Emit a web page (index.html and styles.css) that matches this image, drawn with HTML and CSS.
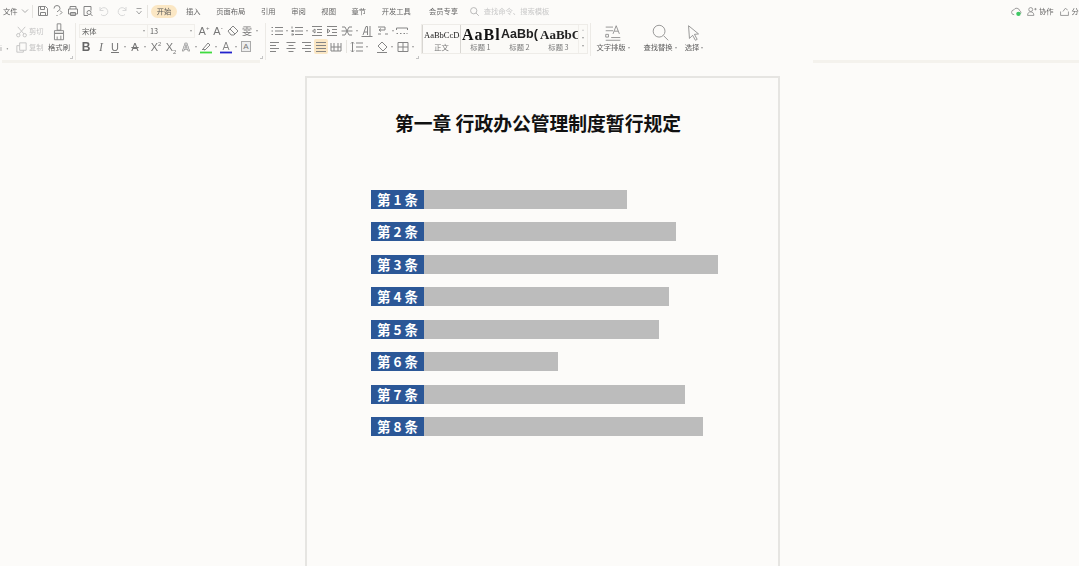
FILE: index.html
```html
<!DOCTYPE html>
<html lang="zh-CN">
<head>
<meta charset="utf-8">
<title>第一章 行政办公管理制度暂行规定</title>
<link rel="stylesheet" href="styles.css">
</head>
<body>
<header class="ribbon">
  <div class="tabrow">
    <span class="file">文件</span>
    <svg class="chev" viewBox="0 0 8 8"><path d="M1 2.500l3 3 3-3"/></svg>
    <i class="vsep"></i>
    <div class="quick">
      <svg class="ic" viewBox="0 0 14 14"><path d="M2.500 2.500h7l2 2v7h-9zM4.500 2.500v3h4v-3M4.500 11.500v-3h5v3"/></svg>
      <svg class="ic" viewBox="0 0 14 14"><path d="M3 4.500a3 3 0 0 1 6 0c0 2-2 2-3 3.500M9 6.500l2 2-2 2M5.500 11.500h1"/></svg>
      <svg class="ic" viewBox="0 0 14 14"><path d="M4 5V2.500h6V5M2.500 5h9v5h-9zM4.500 8.500h5v3h-5z"/></svg>
      <svg class="ic" viewBox="0 0 14 14"><path d="M3 11.500v-9h7v4M3 11.500h4"/><circle cx="8" cy="8.500" r="2"/><path d="M9.500 10l2 2"/></svg>
      <svg class="ic pale" viewBox="0 0 14 14"><path d="M4 3v3.500h3.500M4 6.500a4 4 0 1 1 1 4"/></svg>
      <svg class="ic pale redo" viewBox="0 0 14 14"><path d="M10 3v3.500H6.500M10 6.500a4 4 0 1 0-1 4"/></svg>
      <svg class="ic qmore" viewBox="0 0 14 14"><path d="M4.500 4.500h5M4.500 7l2.500 3 2.500-3"/></svg>
    </div>
    <i class="vsep"></i>
    <nav class="tabs">
      <span class="tab active">开始</span>
      <span class="tab first">插入</span>
      <span class="tab">页面布局</span>
      <span class="tab">引用</span>
      <span class="tab">审阅</span>
      <span class="tab">视图</span>
      <span class="tab">章节</span>
      <span class="tab wide">开发工具</span>
      <span class="tab">会员专享</span>
    </nav>
    <div class="search">
      <svg class="ic" viewBox="0 0 14 14"><circle cx="6" cy="6" r="4"/><path d="M9 9l3.500 3.500"/></svg>
      <span>查找命令、搜索模板</span>
    </div>
    <div class="right">
      <svg class="ic cloud" viewBox="0 0 14 14"><path d="M4 11a3 3 0 0 1-.500-6 4 4 0 0 1 7.500 1 2.500 2.500 0 0 1 1 4"/><circle class="ok" cx="9.500" cy="10" r="2.800"/></svg>
      <svg class="ic" viewBox="0 0 14 14"><circle cx="6" cy="4.500" r="2.500"/><path d="M2 12c0-3 1.500-4.500 4-4.500s4 1.500 4 4.500zM10.500 4h3M12 2.500v3"/></svg>
      <span class="rtext">协作</span>
      <svg class="ic share" viewBox="0 0 14 14"><path d="M2 7v5h10V7M5 7l3-4 3 2"/></svg>
      <span class="rtext">分</span>
    </div>
  </div>
  <div class="toolrow">
    <section class="grp clip">
      <div class="paste"><svg class="ic" viewBox="0 0 14 14"><path d="M-4 3h8v8h-8"/></svg><span class="pastecaret">i ·</span></div>
      <div class="cliprows">
        <div class="cliprow"><svg class="ic pale" viewBox="0 0 14 14"><circle cx="3.500" cy="11" r="1.800"/><circle cx="10.500" cy="11" r="1.800"/><path d="M4.500 9.500L11 2M9.500 9.500L3 2"/></svg><span>剪切</span></div>
        <div class="cliprow"><svg class="ic pale" viewBox="0 0 14 14"><path d="M5 2h7v8H5zM5 5H2v7h7v-2"/></svg><span>复制</span></div>
      </div>
      <div class="big brush">
        <svg viewBox="0 0 22 22"><path d="M9 2h4v7H9zM6 9.500h10v3H6zM6 12.500h10v7H6zM9 16v3.500M13 15v4.500"/></svg>
        <span>格式刷</span>
      </div>
      <i class="launch"></i>
    </section>
    <section class="grp font">
      <div class="frow">
        <div class="sel sname"><span>宋体</span><b class="car"></b></div>
        <div class="sel ssize"><span>13</span><b class="car"></b></div>
        <div class="t"><span class="gl">A<sup>+</sup></span></div>
        <div class="t"><span class="gl">A<sup>-</sup></span></div>
        <div class="t m1"><svg class="ic" viewBox="0 0 14 14"><path d="M7 2l5 5-4 4H5L2 7zM4 5l5 5"/></svg></div>
        <div class="t c"><span class="gl han">雯</span><b class="car"></b></div>
      </div>
      <div class="frow r2">
        <div class="t"><span class="gl bold">B</span></div>
        <div class="t m1"><span class="gl ital">I</span></div>
        <div class="t c"><span class="gl under">U</span><b class="car"></b></div>
        <div class="t c"><span class="gl strike">A</span><b class="car"></b></div>
        <div class="t m1"><span class="gl">X<sup>2</sup></span></div>
        <div class="t m1"><span class="gl">X<sub>2</sub></span></div>
        <div class="t c m1"><span class="gl outline">A</span><b class="car"></b></div>
        <div class="t c"><svg class="ic" viewBox="0 0 14 14"><path d="M4 9l5-6 2 2-5 5zM3 10l1-1 2 1"/><path class="hl" d="M1 12.500h12"/></svg><b class="car"></b></div>
        <div class="t c"><svg class="ic" viewBox="0 0 14 14"><path d="M4 10l3-8 3 8M5 7.500h4"/><path class="bl" d="M1 12.500h12"/></svg><b class="car"></b></div>
        <div class="t"><span class="gl boxed">A</span></div>
      </div>
      <i class="launch"></i>
    </section>
    <section class="grp para">
      <div class="frow p1">
        <div class="t c"><svg class="ic" viewBox="0 0 14 14"><path d="M5 3.500h8M5 7h8M5 10.500h8M1.500 3.500h1.500M1.500 7h1.500M1.500 10.500h1.500"/></svg><b class="car"></b></div>
        <div class="t c"><svg class="ic" viewBox="0 0 14 14"><path d="M5 3.500h8M5 7h8M5 10.500h8M2 2.500v2M1.500 6.500h2v1h-2M1.500 10h2v1h-2"/></svg><b class="car"></b></div>
        <div class="t"><svg class="ic" viewBox="0 0 14 14"><path d="M2 2.500h10M7 5.500h5M7 8.500h5M2 11.500h10M5 5L2.500 7 5 9z"/></svg></div>
        <div class="t m1"><svg class="ic" viewBox="0 0 14 14"><path d="M2 2.500h10M7 5.500h5M7 8.500h5M2 11.500h10M2.500 5L5 7 2.500 9z"/></svg></div>
        <div class="t c m1"><svg class="ic" viewBox="0 0 14 14"><path d="M2 3h3l4 8h3M2 11h3l4-8h3M1.500 7h11"/></svg><b class="car"></b></div>
        <div class="t"><svg class="ic" viewBox="0 0 14 14"><path d="M3 11l3-8.500h1.500v8.500M4 8h3.500M10 2v10M1.500 12.500h11"/></svg></div>
        <div class="t c m2"><svg class="ic" viewBox="0 0 14 14"><path d="M2 3h7v3H3M5 4.500L3 6l2 1.500M9 10h3M2 10h3"/></svg><b class="car"></b></div>
        <div class="t tight"><svg class="ic" viewBox="0 0 14 14"><path d="M1.500 4h11M1.500 4v2M12.500 4v2M1.500 9.500h1.500M5 9.500h1.500M8.500 9.500h1.500M11.500 9.500h1"/></svg></div>
      </div>
      <div class="frow p2">
        <div class="t"><svg class="ic" viewBox="0 0 14 14"><path d="M2 2.500h9M2 5.500h6M2 8.500h9M2 11.500h6"/></svg></div>
        <div class="t m2"><svg class="ic" viewBox="0 0 14 14"><path d="M2.500 2.500h9M4.500 5.500h5M2.500 8.500h9M4.500 11.500h5"/></svg></div>
        <div class="t m1"><svg class="ic" viewBox="0 0 14 14"><path d="M3 2.500h9M6 5.500h6M3 8.500h9M6 11.500h6"/></svg></div>
        <div class="t m1 on"><svg class="ic" viewBox="0 0 14 14"><path d="M2 2.500h10M2 5.500h10M2 8.500h10M2 11.500h10"/></svg></div>
        <div class="t m1"><svg class="ic" viewBox="0 0 14 14"><path d="M2 3v8h10V3M5 3v8M9 3v8M2 7h10"/></svg></div>
        <i class="minisep"></i>
        <div class="t c"><svg class="ic" viewBox="0 0 14 14"><path d="M2.500 2v10M1 3.500L2.500 2 4 3.500M1 10.500L2.500 12 4 10.500M6 3h7M6 7h7M6 11h7"/></svg><b class="car"></b></div>
        <div class="t c m5"><svg class="ic" viewBox="0 0 14 14"><path d="M7 2l5 5-4 4-5-5zM2 12.500h10"/></svg><b class="car"></b></div>
        <div class="t c m1"><svg class="ic" viewBox="0 0 14 14"><path d="M2 2.500h10v9H2zM7 2.500v9M2 7h10"/></svg><b class="car"></b></div>
      </div>
      <i class="launch"></i>
    </section>
    <section class="gallery">
      <div class="sty on"><span class="s0">AaBbCcDd</span><small>正文</small></div>
      <div class="sty"><span class="s1">AaBl</span><small>标题 1</small></div>
      <div class="sty"><span class="s2">AaBb(</span><small>标题 2</small></div>
      <div class="sty"><span class="s3">AaBbC</span><small>标题 3</small></div>
      <div class="scroll"><b class="up"></b><b class="car"></b><b class="car more"></b></div>
    </section>
    <section class="actions">
      <div class="big act1">
        <svg viewBox="0 0 22 22"><path d="M3 4.500h8M3 8.500h8M3 12.500h3v3H3zM9 16h10M3 19h16M11 12L14.500 3 18 12M12.500 9h4"/></svg>
        <span>文字排版<b class="car"></b></span>
      </div>
      <div class="big act2">
        <svg viewBox="0 0 22 22"><circle cx="10" cy="9" r="6.500"/><path d="M15 14l5 5"/></svg>
        <span>查找替换<b class="car"></b></span>
      </div>
      <div class="big act3">
        <svg viewBox="0 0 22 22"><path d="M5 3l11 9-4.500.5 3 5.500-2 1-3-5.500L6 17z"/></svg>
        <span>选择<b class="car"></b></span>
      </div>
    </section>
  </div>
  <div class="shade"><i class="sl"></i><i class="sr"></i></div>
</header>
<main class="workspace">
  <article class="page">
    <h1>第一章 行政办公管理制度暂行规定</h1>
    <ul class="chart">
      <li class="row"><span class="label">第 1 条</span><i class="bar" style="width:203px"></i></li>
      <li class="row"><span class="label">第 2 条</span><i class="bar" style="width:252px"></i></li>
      <li class="row"><span class="label">第 3 条</span><i class="bar" style="width:294px"></i></li>
      <li class="row"><span class="label">第 4 条</span><i class="bar" style="width:245px"></i></li>
      <li class="row"><span class="label">第 5 条</span><i class="bar" style="width:235px"></i></li>
      <li class="row"><span class="label">第 6 条</span><i class="bar" style="width:134px"></i></li>
      <li class="row"><span class="label">第 7 条</span><i class="bar" style="width:261px"></i></li>
      <li class="row"><span class="label">第 8 条</span><i class="bar" style="width:279px"></i></li>
    </ul>
  </article>
</main>
</body>
</html>
```

FILE: styles.css
```css
* { box-sizing: border-box; }
html, body { margin: 0; height: 566px; overflow: hidden; }
body {
  background: #fcfbf9;
  font-family: "Noto Sans CJK SC", "Liberation Sans", sans-serif;
  color: #666;
  font-size: 7.300px;
}
i, b { display: block; font-style: normal; }
svg { display: block; fill: none; stroke: #858585; stroke-width: 1; }

.ribbon { height: 76px; filter: blur(.4px); }

/* tab row */
.tabrow { display: flex; align-items: center; height: 23px; padding: 0 0 1px 3px; }
.file { width: 15px; }
.chev { width: 8px; height: 8px; margin-left: 3px; stroke: #aaa; }
.vsep { width: 1px; height: 13px; background: #e6e4e0; margin-left: 3px; flex: none; }
.quick { display: flex; margin-left: 3px; margin-right: -3px; }
.ic { width: 14px; height: 14px; flex: none; }
.quick .ic { margin-right: 1px; }
.quick .pale { stroke: #d8d8d8; }
.quick .redo { margin-left: 5px; }
.quick .qmore { margin-left: 1px; stroke: #a5a5a5; }
.tabs { display: flex; align-items: center; margin-left: 3px; }
.tab { margin-right: 15.600px; white-space: nowrap; }
.tab.active {
  width: 26px; height: 13px; line-height: 13px; text-align: center;
  margin-right: 0; background: #fbe7c4; border-radius: 7px; color: #555;
}
.tab.first { margin-left: 9px; }
.tab.wide { margin-right: 18px; }
.search { display: flex; align-items: center; margin-left: -5px; color: #c9c9c9; }
.search .ic { width: 11px; height: 11px; margin-right: 4px; stroke: #aaa; }
.right { display: flex; align-items: center; margin-left: auto; width: 68px; flex: none; white-space: nowrap; }
.right .ic { width: 11px; height: 11px; }
.right .rtext { margin-left: 2px; }
.right .share { margin-left: 5px; }
.right .cloud { margin-right: 4px; }
.ok { fill: #3ec764; stroke: none; }

/* tool row */
.toolrow { display: flex; height: 37px; }
.grp { position: relative; display: flex; flex-direction: column; flex: none; }
.launch {
  position: absolute; right: 2px; bottom: 1px; width: 3px; height: 3px;
  border-right: 1px solid #c4c4c4; border-bottom: 1px solid #c4c4c4;
}
.clip { flex-direction: row; width: 76px; border-right: 1px solid #eceae6; }
.paste { width: 15px; flex: none; }
.paste .ic { margin-top: 2px; margin-left: -6px; }
.pastecaret { display: block; margin-top: 4px; color: #999; line-height: 10px; }
.cliprows { display: flex; flex-direction: column; gap: 2px; padding-top: 1px; width: 30px; flex: none; color: #c4c4c4; }
.cliprow { display: flex; align-items: center; height: 14px; gap: 1px; }
.cliprow .pale { width: 13px; height: 13px; stroke: #c4c4c4; }
.big { display: flex; flex-direction: column; align-items: center; white-space: nowrap; color: #5c5c5c; flex: none; }
.big svg { width: 20px; height: 20px; }
.big span { display: flex; align-items: center; line-height: 11px; margin-top: -1px; }
.brush { width: 26px; margin-left: 1px; }
.brush svg { margin-top: -1px; }
.brush span { margin-top: 0; }

.font { width: 190px; padding-left: 3px; border-right: 1px solid #eceae6; }
.frow { display: flex; align-items: center; height: 15px; }
.frow.r2, .frow.p2 { margin-top: 1px; }
.sel {
  display: flex; align-items: center; justify-content: space-between;
  height: 14px; background: #fbfaf7; border: 1px solid #f0eeea; padding: 0 2px; color: #5c5c5c;
}
.sname { width: 69px; }
.ssize { width: 48px; margin-left: -1px; margin-right: 2px; }
.t { display: flex; align-items: center; justify-content: center; width: 14px; height: 14px; flex: none; color: #777; }
.t.c { width: 20px; justify-content: flex-start; }
.t.m1 { margin-left: 1px; }
.t.m2 { margin-left: 2px; }
.t.m5 { margin-left: 5px; }
.t.tight { margin-left: -1px; }
.t.on { background: #fbe7c4; border-radius: 2px; height: 15px; }
.car {
  flex: none; width: 0; height: 0; margin-left: 2px;
  border-left: 1.500px solid transparent; border-right: 1.500px solid transparent; border-top: 2px solid #999;
}
.gl { display: block; width: 14px; text-align: center; font: 11px/14px "Liberation Sans", sans-serif; color: #777; white-space: nowrap; }
.gl sup, .gl sub { font-size: 6px; line-height: 0; }
.gl.bold { font-weight: 700; color: #666; font-size: 12px; }
.gl.ital { font-family: "Liberation Serif", serif; font-style: italic; font-size: 12px; }
.gl.under { text-decoration: underline; }
.gl.strike { text-decoration: line-through; }
.gl.outline { font-weight: 700; color: #e4e4e4; -webkit-text-stroke: .5px #777; }
.gl.boxed { width: 10px; margin: 0 2px; font-size: 8px; line-height: 9px; border: 1px solid #aaa; background: #eee; }
.gl.han { font: 10px/14px "Noto Sans CJK SC", sans-serif; }
.hl { stroke: #3fdb3f; stroke-width: 1.800; }
.bl { stroke: #2222cc; stroke-width: 1.800; }

.para { width: 155px; padding-left: 2px; }
.para .frow.p1 { margin-left: 2px; }
.minisep { width: 1px; height: 13px; background: #e6e4e0; margin: 0 3px; flex: none; }

.gallery {
  display: flex; height: 30px; width: 167px; margin: 1px 0 0;
  background: #fbfaf7; border: 1px solid #eeece8; flex: none; overflow: hidden;
}
.sty { width: 39px; flex: none; display: flex; flex-direction: column; align-items: center; overflow: hidden; font-family: "Liberation Serif", serif; }
.sty.on { border: 1px solid #d8d6d2; background: #fcfbf9; margin: -1px 0; padding-top: 1px; }
.sty span { display: block; width: 100%; height: 17px; line-height: 19px; color: #222; white-space: nowrap; overflow: hidden; padding-left: 1px; }
.sty small { font: 7.300px/11px "Noto Sans CJK SC", sans-serif; color: #777; }
.s0 { font-size: 8.500px; }
.s1 { font-size: 16px; font-weight: 700; letter-spacing: 1px; color: #111 !important; }
.s2 { font-size: 12.500px; font-weight: 700; font-family: "Liberation Sans", sans-serif; }
.s3 { font-size: 13px; font-weight: 700; }
.scroll { flex: 1; display: flex; flex-direction: column; align-items: center; gap: 6px; padding-top: 4px; border-left: 1px solid #f0eeea; }
.scroll .car { margin: 0; }
.scroll .up { width: 0; height: 0; border-left: 1.500px solid transparent; border-right: 1.500px solid transparent; border-bottom: 2px solid #ccc; }
.actions { display: flex; margin-left: 2px; padding-left: 6px; border-left: 1px solid #eceae6; height: 33px; }
.act1 { width: 32px; }
.act2 { width: 32px; margin-left: 15px; }
.act3 { width: 18px; margin-left: 9px; }
.actions .big svg { stroke-width: .900; }

.shade { position: relative; height: 3px; }
.shade i { position: absolute; top: 0; height: 3px; background: #f4f2ed; }
.shade .sl { left: 2px; width: 258px; }
.shade .sr { left: 813px; right: 0; }

/* document */
.workspace { padding-left: 305px; }
.page {
  width: 475px; height: 490px; background: #fcfbf9;
  border: 2px solid #e6e5e2; border-bottom: 0; padding-top: 31px;
}
.page h1 {
  margin: 0; padding-right: 9px; text-align: center; color: #111;
  font: 700 18.800px/28px "Noto Sans CJK SC", sans-serif;
}
.chart { list-style: none; margin: 52.900px 0 0; padding: 0 0 0 64px; display: flex; flex-direction: column; gap: 13.500px; }
.row { display: flex; height: 19px; }
.label {
  width: 53px; height: 19px; flex: none; background: #2b5797; color: #fff; text-align: center;
  font: 700 13.500px/19px "Noto Sans CJK SC", sans-serif;
}
.bar { height: 19px; background: #bcbcbc; }
```
